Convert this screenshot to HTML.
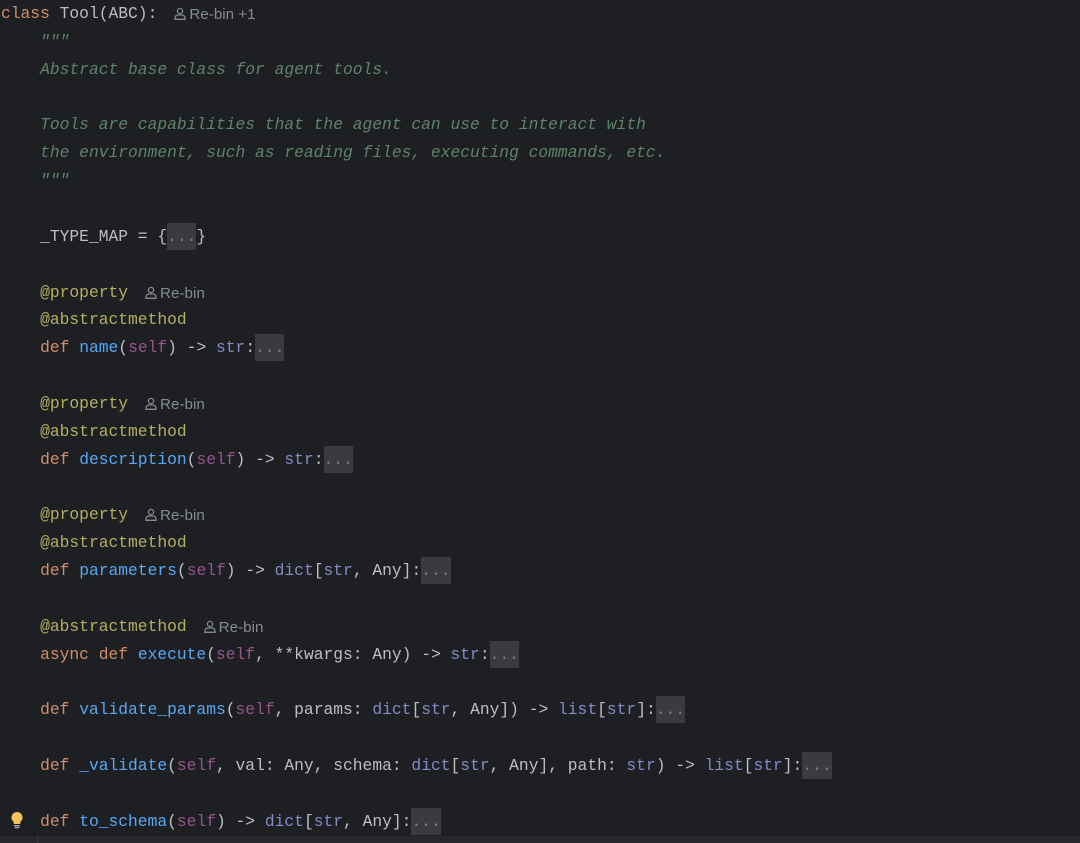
<!DOCTYPE html>
<html><head><meta charset="utf-8"><style>
html,body{margin:0;padding:0;background:#1e1f22;width:1080px;height:843px;overflow:hidden}
pre{margin:0;padding:0 0 0 1px;font-family:"Liberation Mono",monospace;font-size:16.3px;line-height:27.86px;color:#bcbec4;white-space:pre}
.k{color:#cf8e6d}.f{color:#56a8f5}.s{color:#94558d}.c{color:#5f826b;font-style:italic}.d{color:#b3ae60}.b{color:#8888c6}
.e{background:#393b40;color:#7a7e85;display:inline-block;line-height:27px}
.h{font-family:"Liberation Sans",sans-serif;font-size:15.2px;line-height:20px;color:#868a91;font-style:normal;margin-left:17px;position:relative;top:1px}
.h svg{vertical-align:-1px;margin-right:3px}
.bot{position:absolute;left:0;top:836px;width:1080px;height:7px;background:#26282c}
.bot i{position:absolute;left:37px;top:0;width:1px;height:7px;background:#393b40}
.bulb{position:absolute;left:10px;top:811px}
</style></head><body>
<pre><span class="k">class</span> Tool(ABC):<span class="h"><svg width="12" height="13" viewBox="0 0 12 13"><circle cx="6" cy="4" r="2.6" fill="none" stroke="#868a91" stroke-width="1.3"/><path d="M1 12.3v-1.3a3 3 0 0 1 3-3h4a3 3 0 0 1 3 3v1.3z" fill="none" stroke="#868a91" stroke-width="1.3"/></svg>Re-bin +1</span>
    <span class="c">"""</span>
    <span class="c">Abstract base class for agent tools.</span>

    <span class="c">Tools are capabilities that the agent can use to interact with</span>
    <span class="c">the environment, such as reading files, executing commands, etc.</span>
    <span class="c">"""</span>

    _TYPE_MAP = {<span class="e">...</span>}

    <span class="d">@property</span><span class="h"><svg width="12" height="13" viewBox="0 0 12 13"><circle cx="6" cy="4" r="2.6" fill="none" stroke="#868a91" stroke-width="1.3"/><path d="M1 12.3v-1.3a3 3 0 0 1 3-3h4a3 3 0 0 1 3 3v1.3z" fill="none" stroke="#868a91" stroke-width="1.3"/></svg>Re-bin</span>
    <span class="d">@abstractmethod</span>
    <span class="k">def</span> <span class="f">name</span>(<span class="s">self</span>) -&gt; <span class="b">str</span>:<span class="e">...</span>

    <span class="d">@property</span><span class="h"><svg width="12" height="13" viewBox="0 0 12 13"><circle cx="6" cy="4" r="2.6" fill="none" stroke="#868a91" stroke-width="1.3"/><path d="M1 12.3v-1.3a3 3 0 0 1 3-3h4a3 3 0 0 1 3 3v1.3z" fill="none" stroke="#868a91" stroke-width="1.3"/></svg>Re-bin</span>
    <span class="d">@abstractmethod</span>
    <span class="k">def</span> <span class="f">description</span>(<span class="s">self</span>) -&gt; <span class="b">str</span>:<span class="e">...</span>

    <span class="d">@property</span><span class="h"><svg width="12" height="13" viewBox="0 0 12 13"><circle cx="6" cy="4" r="2.6" fill="none" stroke="#868a91" stroke-width="1.3"/><path d="M1 12.3v-1.3a3 3 0 0 1 3-3h4a3 3 0 0 1 3 3v1.3z" fill="none" stroke="#868a91" stroke-width="1.3"/></svg>Re-bin</span>
    <span class="d">@abstractmethod</span>
    <span class="k">def</span> <span class="f">parameters</span>(<span class="s">self</span>) -&gt; <span class="b">dict</span>[<span class="b">str</span>, Any]:<span class="e">...</span>

    <span class="d">@abstractmethod</span><span class="h"><svg width="12" height="13" viewBox="0 0 12 13"><circle cx="6" cy="4" r="2.6" fill="none" stroke="#868a91" stroke-width="1.3"/><path d="M1 12.3v-1.3a3 3 0 0 1 3-3h4a3 3 0 0 1 3 3v1.3z" fill="none" stroke="#868a91" stroke-width="1.3"/></svg>Re-bin</span>
    <span class="k">async def</span> <span class="f">execute</span>(<span class="s">self</span>, **kwargs: Any) -&gt; <span class="b">str</span>:<span class="e">...</span>

    <span class="k">def</span> <span class="f">validate_params</span>(<span class="s">self</span>, params: <span class="b">dict</span>[<span class="b">str</span>, Any]) -&gt; <span class="b">list</span>[<span class="b">str</span>]:<span class="e">...</span>

    <span class="k">def</span> <span class="f">_validate</span>(<span class="s">self</span>, val: Any, schema: <span class="b">dict</span>[<span class="b">str</span>, Any], path: <span class="b">str</span>) -&gt; <span class="b">list</span>[<span class="b">str</span>]:<span class="e">...</span>

    <span class="k">def</span> <span class="f">to_schema</span>(<span class="s">self</span>) -&gt; <span class="b">dict</span>[<span class="b">str</span>, Any]:<span class="e">...</span>
</pre>
<svg class="bulb" width="14" height="18" viewBox="0 0 14 18"><path d="M7 1a5.5 5.5 0 0 0-3.3 9.9V13h6.6v-2.1A5.5 5.5 0 0 0 7 1z" fill="#f2c55c"/><rect x="4" y="14" width="6" height="1.5" fill="#a0a0a0"/><rect x="4.8" y="16" width="4.4" height="1.3" fill="#a0a0a0"/></svg>
<div class="bot"><i></i></div>
</body></html>
